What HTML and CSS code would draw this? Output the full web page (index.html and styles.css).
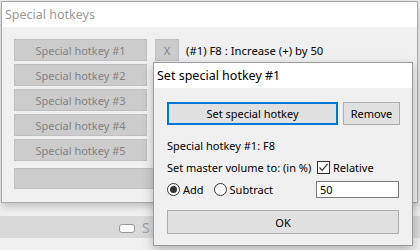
FILE: index.html
```html
<!DOCTYPE html>
<html>
<head>
<meta charset="utf-8">
<link rel="stylesheet" href="styles.css">
</head>
<body>
<div class="desktop">
  <div class="backdrop">
    <div class="backdrop-band">
      <span class="toggle"></span>
      <span class="band-text">S</span>
    </div>
  </div>

  <div class="window main-window">
    <div class="titlebar inactive">Special hotkeys</div>
    <div class="main-body">
      <div class="hk-row">
        <button class="btn disabled wide">Special hotkey #1</button>
        <button class="btn disabled x">X</button>
        <span class="hk-desc">(#1) F8 : Increase (+) by 50</span>
      </div>
      <div class="hk-row">
        <button class="btn disabled wide">Special hotkey #2</button>
      </div>
      <div class="hk-row">
        <button class="btn disabled wide">Special hotkey #3</button>
      </div>
      <div class="hk-row">
        <button class="btn disabled wide">Special hotkey #4</button>
      </div>
      <div class="hk-row">
        <button class="btn disabled wide">Special hotkey #5</button>
      </div>
      <button class="btn disabled bar"></button>
    </div>
  </div>

  <div class="window dialog">
    <div class="titlebar">Set special hotkey #1</div>
    <div class="dialog-body">
      <div class="top-buttons">
        <button class="btn default set-btn">Set special hotkey</button>
        <button class="btn remove-btn">Remove</button>
      </div>
      <div class="label-row">Special hotkey #1: F8</div>
      <div class="d-grid">
        <span class="label">Set master volume to: (in %)</span>
        <label class="check">
          <span class="checkbox">
            <svg width="11" height="11" viewBox="0 0 11 11"><path d="M1.5 5.5 L4.2 8.4 L9.6 1.8" fill="none" stroke="#333" stroke-width="1.2"/></svg>
          </span>
          <span>Relative</span>
        </label>
        <div class="radios">
          <label class="radio"><span class="circle on"></span><span>Add</span></label>
          <label class="radio"><span class="circle"></span><span>Subtract</span></label>
        </div>
        <div class="edit">50</div>
      </div>
      <button class="btn ok-btn">OK</button>
    </div>
  </div>
</div>
</body>
</html>
```

FILE: styles.css
```css
* { box-sizing: border-box; }
html, body { margin: 0; padding: 0; }
body {
  width: 420px;
  height: 250px;
  overflow: hidden;
  background: #f0f0f0;
  font-family: "Noto Sans", "Open Sans", sans-serif;
  font-size: 11px;
  color: #000;
  white-space: nowrap;
}
.desktop {
  position: relative;
  width: 420px;
  height: 250px;
}
.backdrop {
  padding-top: 216px;
}
.backdrop-band {
  height: 22px;
  background: #d9d9d9;
  display: flex;
  align-items: center;
  padding-left: 119px;
  gap: 7px;
}
.toggle {
  width: 16px;
  height: 9px;
  border: 1px solid #9a9a9a;
  border-radius: 3px;
  background: #fafafa;
  margin-top: 2px;
}
.band-text {
  color: #a0a0a0;
  font-size: 14px;
}

.window {
  position: absolute;
  border: 1px solid #a8a8a8;
  background: #f0f0f0;
  display: flex;
  flex-direction: column;
}
.main-window {
  left: 1px;
  top: 1px;
  width: 417px;
  height: 202px;
  box-shadow: 0 3px 8px rgba(0,0,0,0.22);
}
.dialog {
  left: 153px;
  top: 62px;
  width: 260px;
  height: 184px;
  border-color: #9a9a9a;
  box-shadow: 0 4px 10px rgba(0,0,0,0.25);
}
.titlebar {
  height: 25px;
  background: #fff;
  padding-left: 3px;
  font-size: 12.5px;
  line-height: 25px;
  color: #000;
  flex: none;
}
.titlebar.inactive { color: #999; }

.btn {
  font-family: inherit;
  font-size: 11px;
  margin: 0;
  padding: 0;
  border: 1px solid #adadad;
  background: #e1e1e1;
  color: #000;
}
.btn.disabled {
  background: #cccccc;
  border-color: #bfbfbf;
  color: #838383;
}

.main-body {
  padding: 12px 0 0 12px;
  display: flex;
  flex-direction: column;
  gap: 3px;
}
.hk-row {
  display: flex;
  align-items: center;
  height: 22px;
}
.btn.wide {
  width: 133px;
  height: 22px;
}
.btn.x {
  width: 24px;
  height: 22px;
  margin-left: 8px;
}
.hk-desc {
  margin-left: 7px;
  font-size: 11.3px;
}
.btn.bar {
  margin-top: 4px;
  width: 390px;
  height: 21px;
}

.dialog-body {
  padding: 14px 12px 0 13px;
  display: flex;
  flex-direction: column;
}
.top-buttons {
  display: flex;
  gap: 5px;
}
.set-btn {
  width: 171px;
  height: 23px;
}
.btn.default {
  border: 2px solid #0078d7;
}
.remove-btn {
  width: 57px;
  height: 23px;
}
.label-row {
  margin-top: 12px;
  height: 18px;
  line-height: 18px;
}
.d-grid {
  margin-top: 3px;
  display: grid;
  grid-template-columns: 149px 83px;
  grid-template-rows: 18px 17px;
  row-gap: 5px;
  align-items: center;
}
.check {
  display: flex;
  align-items: center;
  gap: 3px;
  margin-left: 1px;
}
.checkbox {
  width: 13px;
  height: 13px;
  border: 1px solid #333;
  background: #fff;
  display: flex;
  align-items: center;
  justify-content: center;
}
.radios {
  display: flex;
  gap: 10px;
}
.radio {
  display: flex;
  align-items: center;
  gap: 3px;
}
.circle {
  width: 13px;
  height: 13px;
  border: 1px solid #333;
  border-radius: 50%;
  background: #fff;
  display: flex;
  align-items: center;
  justify-content: center;
}
.circle.on::after {
  content: "";
  width: 7px;
  height: 7px;
  border-radius: 50%;
  background: #333;
}
.edit {
  height: 17px;
  border: 1px solid #7a7a7a;
  background: #fff;
  padding-left: 3px;
  line-height: 15px;
}
.ok-btn {
  margin-top: 12px;
  width: 232px;
  height: 24px;
}
```
